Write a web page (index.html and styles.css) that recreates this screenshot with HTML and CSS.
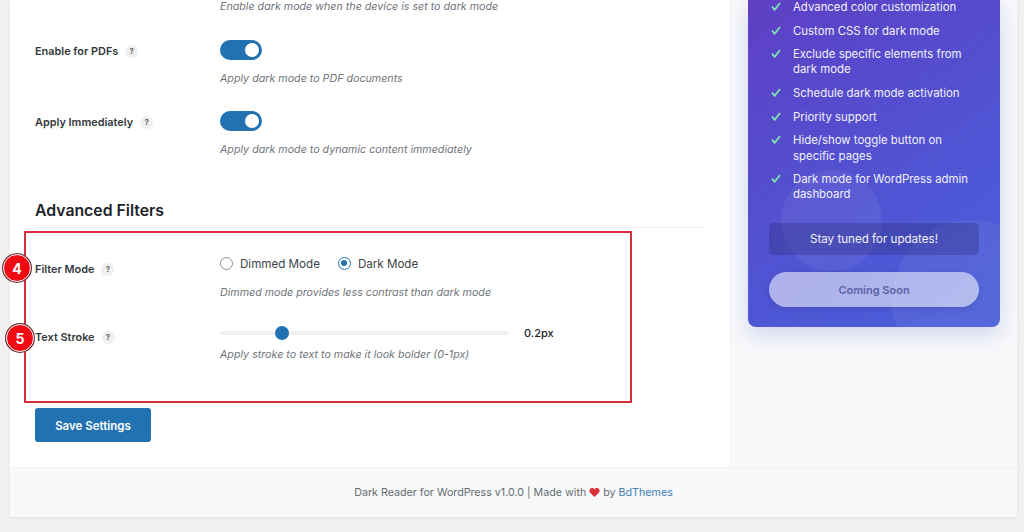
FILE: index.html
```html
<!DOCTYPE html>
<html lang="en">
<head>
<meta charset="utf-8">
<title>Dark Reader for WordPress</title>
<link rel="stylesheet" href="styles.css">
</head>
<body>
<div class="panel">
  <div class="columns">
    <main class="main">
      <div class="row row-top">
        <div></div>
        <p class="desc">Enable dark mode when the device is set to dark mode</p>
      </div>
      <div class="row row-pdf">
        <div class="label">Enable for PDFs <span class="help">?</span></div>
        <div>
          <span class="toggle"><span class="knob"></span></span>
          <p class="desc desc-toggle">Apply dark mode to PDF documents</p>
        </div>
      </div>
      <div class="row row-imm">
        <div class="label">Apply Immediately <span class="help">?</span></div>
        <div>
          <span class="toggle"><span class="knob"></span></span>
          <p class="desc desc-toggle">Apply dark mode to dynamic content immediately</p>
        </div>
      </div>
      <h2 class="heading">Advanced Filters</h2>
      <div class="filters">
        <div class="row row-filter">
          <div class="label">Filter Mode <span class="help">?</span></div>
          <div>
            <div class="radios">
              <span class="radio-item"><span class="radio"></span>Dimmed Mode</span>
              <span class="radio-item"><span class="radio radio-on"></span>Dark Mode</span>
            </div>
            <p class="desc desc-radio">Dimmed mode provides less contrast than dark mode</p>
          </div>
        </div>
        <div class="row row-stroke">
          <div class="label">Text Stroke <span class="help">?</span></div>
          <div>
            <div class="slider-line">
              <span class="track"><span class="thumb"></span></span>
              <span class="value">0.2px</span>
            </div>
            <p class="desc desc-slider">Apply stroke to text to make it look bolder (0-1px)</p>
          </div>
        </div>
        <span class="callout"></span>
        <span class="badge badge-4">4</span>
        <span class="badge badge-5">5</span>
      </div>
      <button class="save">Save Settings</button>
    </main>
    <aside class="side">
      <div class="promo">
        <span class="blob blob-a"></span>
        <span class="blob blob-b"></span>
        <ul class="features">
          <li><svg class="check" viewBox="0 0 10 9" width="10" height="9"><path d="M1 4.700 3.700 7.800 9 1" /></svg>Advanced color customization</li>
          <li><svg class="check" viewBox="0 0 10 9" width="10" height="9"><path d="M1 4.700 3.700 7.800 9 1" /></svg>Custom CSS for dark mode</li>
          <li><svg class="check" viewBox="0 0 10 9" width="10" height="9"><path d="M1 4.700 3.700 7.800 9 1" /></svg>Exclude specific elements from dark mode</li>
          <li><svg class="check" viewBox="0 0 10 9" width="10" height="9"><path d="M1 4.700 3.700 7.800 9 1" /></svg>Schedule dark mode activation</li>
          <li><svg class="check" viewBox="0 0 10 9" width="10" height="9"><path d="M1 4.700 3.700 7.800 9 1" /></svg>Priority support</li>
          <li><svg class="check" viewBox="0 0 10 9" width="10" height="9"><path d="M1 4.700 3.700 7.800 9 1" /></svg>Hide/show toggle button on specific pages</li>
          <li><svg class="check" viewBox="0 0 10 9" width="10" height="9"><path d="M1 4.700 3.700 7.800 9 1" /></svg>Dark mode for WordPress admin dashboard</li>
        </ul>
        <div class="notice">Stay tuned for updates!</div>
        <div class="soon">Coming Soon</div>
      </div>
    </aside>
  </div>
  <footer class="footer">Dark Reader for WordPress v1.0.0 | Made with <svg class="heart" viewBox="0 0 24 24" width="11" height="11"><path d="M12 22 2.600 12.400C-.2 9.500.4 4.800 3.600 3c2.900-1.600 6.400-.8 8.400 2.200C14 2.200 17.500 1.400 20.400 3c3.200 1.800 3.800 6.500 1 9.400z" fill="#d9303a"/></svg> by <a class="link">BdThemes</a></footer>
</div>
</body>
</html>
```
FILE: styles.css
```css
* { box-sizing: border-box; }
html, body { margin: 0; height: 532px; overflow: hidden; }
body { background: #f0f0f1; font-family: Inter, "Liberation Sans", sans-serif; color: #1d2327; }
.panel { margin: 0 7px 0 10px; height: 517px; background: #fff; display: flex; flex-direction: column; box-shadow: 0 1px 3px rgba(0,0,0,.05); }
.columns { display: flex; height: 467px; }
.main { width: 720px; padding: 0 25px; }
.side { flex: 1; background: #f8f9fa; border-left: 1px solid #f1f2f4; padding: 0 17px; }
.row { display: grid; grid-template-columns: 185px 1fr; align-items: start; }
.desc { margin: 0; font-size: 10.7px; line-height: 14px; font-style: italic; color: #6f7479; }
.row-top { height: 12px; }
.row-pdf { margin-top: 28px; }
.row-imm { margin-top: 25px; }
.label { font-size: 10.9px; line-height: 14px; font-weight: 600; color: #33393e; display: flex; align-items: center; margin-top: 4px; }
.help { width: 13px; height: 13px; margin-left: 7px; border-radius: 50%; background: #f0f0f1; color: #50575e; font-size: 8px; line-height: 13px; text-align: center; font-weight: 600; }
.toggle { display: block; width: 42px; height: 20px; border-radius: 10px; background: #2271b1; position: relative; }
.knob { position: absolute; top: 3px; right: 3px; width: 14px; height: 14px; border-radius: 50%; background: #fff; }
.desc-toggle { margin-top: 12px; }
.heading { margin: 43px 0 0; height: 27px; width: 670px; font-size: 15.8px; line-height: 22px; font-weight: 600; color: #1d2327; box-shadow: 0 1px 0 #f0f0f1; }
.filters { position: relative; height: 177px; padding-top: 27px; }
.row-filter .label { margin-top: 8px; }
.radios { display: flex; gap: 18px; height: 16px; align-items: center; margin-top: 2px; }
.radio-item { display: flex; align-items: center; gap: 7px; font-size: 11.6px; line-height: 16px; color: #3c434a; }
.radio { width: 13px; height: 13px; margin-top: -2px; border-radius: 50%; border: 1px solid #8c8f94; background: #fff; }
.radio-on { border-color: #2271b1; position: relative; }
.radio-on::after { content: ""; position: absolute; left: 2.500px; top: 2.500px; width: 6px; height: 6px; border-radius: 50%; background: #2271b1; }
.desc-radio { margin-top: 14px; }
.row-stroke { margin-top: 26px; }
.row-stroke .label { margin-top: 4px; }
.slider-line { display: flex; align-items: center; gap: 15px; height: 14px; }
.track { display: block; width: 289px; height: 4px; border-radius: 2px; background: #f0f0f1; position: relative; }
.thumb { position: absolute; left: 55px; top: -5px; width: 14px; height: 14px; border-radius: 50%; background: #2271b1; }
.value { font-size: 11px; font-weight: 500; color: #1d2327; }
.desc-slider { margin-top: 8px; }
.callout { position: absolute; left: -11px; top: 4px; width: 608px; height: 172px; border: 2px solid #d8303a; pointer-events: none; }
.badge { position: absolute; width: 28px; height: 28px; border-radius: 50%; background: #f00a14; border: 1px solid #fff; box-shadow: 0 0 0 1px #6b2a2e; color: #fff; font-size: 14px; font-weight: 700; display: flex; align-items: center; justify-content: center; }
.badge-4 { left: -32px; top: 27px; }
.badge-5 { left: -29px; top: 97px; }
.save { display: block; margin-top: 4px; width: 116px; height: 34px; padding: 1px 0 0; border: 0; border-radius: 3px; background: #2271b1; color: #fff; font: 600 11.5px Inter, "Liberation Sans", sans-serif; }
.promo { position: relative; overflow: hidden; width: 252px; height: 327px; padding: 0 21px; border-radius: 0 0 8px 8px; color: #f1f1fb; background: linear-gradient(145deg, #5f3fc4 0%, #4f55d4 60%, #4a60da 100%); box-shadow: 0 8px 22px rgba(79,85,212,.22); }
.blob { position: absolute; border-radius: 50%; background: rgba(255,255,255,.06); }
.blob-a { left: 33px; top: 170px; width: 101px; height: 101px; }
.blob-b { left: 144px; top: 220px; width: 160px; height: 160px; }
.features { position: relative; list-style: none; margin: 0; padding: 0; font-size: 11.4px; line-height: 15.3px; }
.features li { position: relative; padding-left: 24px; margin-bottom: 8.300px; }
.check { position: absolute; left: 2px; top: 2px; fill: none; stroke: #7ce3b5; stroke-width: 1.800; }
.notice { position: relative; margin-top: 20px; height: 32px; border-radius: 5px; background: rgba(40,40,110,.3); text-align: center; font-size: 11.6px; line-height: 32px; }
.soon { position: relative; margin-top: 17px; height: 35px; border-radius: 18px; background: rgba(255,255,255,.55); color: #5d62a8; text-align: center; font-size: 11px; font-weight: 600; line-height: 37px; box-shadow: 0 2px 8px rgba(0,0,0,.1); }
.footer { height: 50px; background: #f8f9fa; border-top: 1px solid #f0f0f1; display: flex; align-items: center; justify-content: center; font-size: 10.7px; color: #666b71; white-space: pre; }
.heart { display: block; }
.link { color: #3f80b5; }
```
